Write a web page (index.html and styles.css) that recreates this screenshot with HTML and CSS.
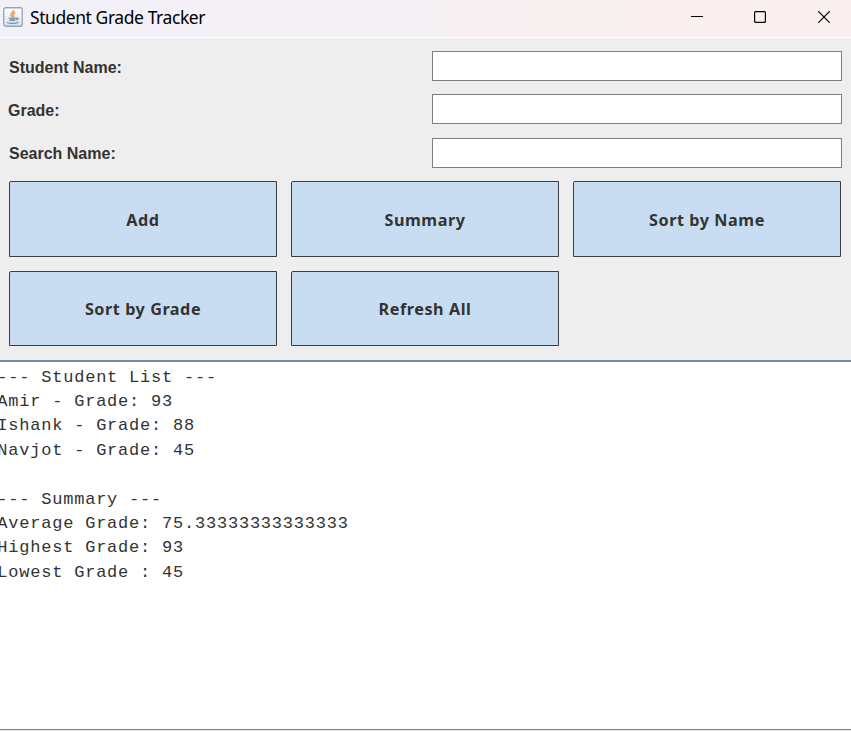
FILE: index.html
```html
<!DOCTYPE html>
<html lang="en">
<head>
<meta charset="utf-8">
<title>Student Grade Tracker</title>
<link rel="stylesheet" href="styles.css">
</head>
<body>
<div class="window">
  <header class="titlebar">
    <svg class="app-icon" width="20" height="20" viewBox="0 0 20 20">
      <defs><linearGradient id="tile" x1="0" y1="0" x2="0" y2="1"><stop offset="0" stop-color="#fff"/><stop offset="1" stop-color="#dde2e7"/></linearGradient></defs>
      <rect x="0.75" y="0.75" width="18.5" height="18.5" rx="2" fill="url(#tile)" stroke="#8fa6b7" stroke-width="1.3"/>
      <path d="M10.8 3C11 5 7.2 6.3 8 8.1C8.3 8.9 9.2 9.5 9.3 10.1M12.3 5.7C10.2 6.7 9.2 7.8 10.4 8.7C10.9 9.2 10.7 9.8 10.1 10.3" fill="none" stroke="#ed8b3b" stroke-width="1.3"/>
      <path d="M5.7 11.2H13M6.4 13.1Q9.5 14 12.3 13M4 15.5Q9 17.3 15.5 15.4M13 11.3C15.8 10.3 15.5 12.8 13.2 13.1" fill="none" stroke="#6e91ad" stroke-width="1.3"/>
      <path d="M6.4 11.2H12.8L11.8 14H7.2Z" fill="#819fb7"/>
    </svg>
    <h1 class="title">Student Grade Tracker</h1>
    <div class="controls">
      <svg width="12" height="12" viewBox="0 0 12 12"><path d="M0 5.5H12" stroke="#000"/></svg>
      <svg width="12" height="12" viewBox="0 0 12 12"><rect x="0.6" y="0.6" width="10.8" height="10.8" rx="1" fill="none" stroke="#000" stroke-width="1.2"/></svg>
      <svg width="12" height="12" viewBox="0 0 12 12"><path d="M0.3 0.3L11.7 11.7M11.7 0.3L0.3 11.7" stroke="#000" stroke-width="1.2"/></svg>
    </div>
  </header>
  <main class="panel">
    <div class="fields">
      <label for="name">Student Name:</label><input id="name" type="text">
      <label for="grade" class="grade-label">Grade:</label><input id="grade" type="text">
      <label for="search">Search Name:</label><input id="search" type="text">
    </div>
    <div class="buttons">
      <button>Add</button><button>Summary</button><button>Sort by Name</button>
      <button class="lower">Sort by Grade</button><button class="lower">Refresh All</button>
    </div>
  </main>
  <pre class="output">--- Student List ---
Amir - Grade: 93
Ishank - Grade: 88
Navjot - Grade: 45

--- Summary ---
Average Grade: 75.33333333333333
Highest Grade: 93
Lowest Grade : 45</pre>
</div>
</body>
</html>
```
FILE: styles.css
```css
* { box-sizing: border-box; }
body { margin: 0; background: #eee; }
.window { width: 851px; height: 731px; display: flex; flex-direction: column; overflow: hidden; }
.titlebar {
  height: 38px; flex: none; display: flex; align-items: flex-start;
  padding: 7px 21px 0 3px; border-bottom: 1px solid #fff;
  background: linear-gradient(90deg, #f2f1f9, #f5f1f5 45%, #f9f0ef 75%);
}
.app-icon { flex: none; }
.title {
  margin: -2px 0 0 7px; font: 400 17.5px/24px "Noto Sans", sans-serif;
  letter-spacing: -0.43px; color: #000; white-space: nowrap;
}
.controls { margin: 4px 0 0 auto; display: flex; gap: 52px; }
.controls svg { display: block; }
.controls svg:first-child { margin-right: -1px; }
.panel { height: 322px; flex: none; padding: 13px 9px 0; background: #eee; }
.fields { display: grid; grid-template-columns: 423px 410px; grid-template-rows: 43px 44px 30px; }
.fields label { font: 700 16px/33px "Liberation Sans", sans-serif; color: #333; white-space: nowrap; }
.fields .grade-label { margin-left: -1px; line-height: 34px; }
.fields label:nth-of-type(3) { line-height: 31px; }
.fields input { width: 410px; height: 30px; border: 1px solid #7f7f7f; padding: 0 4px; background: #fff; outline: none; font: 16px "Liberation Sans", sans-serif; }
.buttons { margin-top: 13px; display: grid; grid-template-columns: repeat(3, 268px); grid-template-rows: 76px 75px; gap: 14px; }
.buttons button {
  margin: 0; padding: 2px 0 0; border: 1px solid #3b3d40; border-top-left-radius: 2px;
  background: #c8ddf2; color: #333; font: 700 16.2px/24px "Noto Sans", sans-serif; letter-spacing: 0.55px;
}
.buttons .lower { padding-top: 0; }
.output {
  flex: none; height: 370px; margin: 0 0 0 -3px; padding: 3.7px 0 0 0.3px; border-top: 2px solid #7a8a99; border-bottom: 1px solid #7f7f7f;
  background: #fff; color: #333; font: 17px/24.375px "Liberation Mono", monospace; letter-spacing: 0.78px;
}
```
